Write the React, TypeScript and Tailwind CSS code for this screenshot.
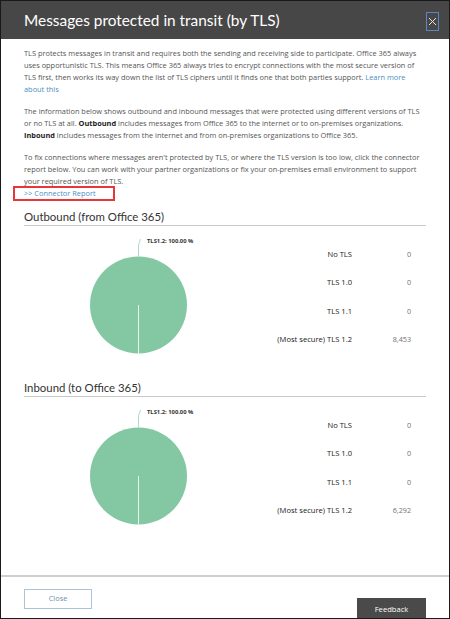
import React from "react";

const font = { fontFamily: '"Open Sans", "Noto Sans", Arial, sans-serif' };
const lato = { fontFamily: 'Lato, "Open Sans", Arial, sans-serif' };

function Pie() {
  return (
    <svg width="230" height="136" viewBox="0 0 230 136" className="block shrink-0">
      <circle cx="114.5" cy="79" r="48.5" fill="#83c7a3" />
      <line x1="114.5" y1="79" x2="114.5" y2="127.5" stroke="#e8f5ee" strokeWidth="1" />
      <path d="M114.5 30.5 L114.5 19 L116.5 13" fill="none" stroke="#9fd3b5" strokeWidth="0.8" />
      <text x="123" y="16.5" fontSize="5.8" fontWeight="700" fill="#333" style={font}>
        TLS1.2: 100.00 %
      </text>
    </svg>
  );
}

function Section({ title, total }: { title: string; total: string }) {
  const rows: [string, string][] = [
    ["No TLS", "0"],
    ["TLS 1.0", "0"],
    ["TLS 1.1", "0"],
    ["(Most secure) TLS 1.2", total],
  ];
  return (
    <div className="mx-[23px]">
      <div className="text-[11.4px] leading-[15px] text-[#333] border-b border-[#c8c8c8] pb-[1px]" style={lato}>
        {title}
      </div>
      <div className="flex">
        <Pie />
        <div className="flex flex-col pt-[23px] shrink-0">
          {rows.map(([l, v]) => (
            <div key={l} className="flex h-[28.3px] items-start">
              <div className="w-[98px] text-right text-[7.6px] text-[#222] whitespace-nowrap">{l}</div>
              <div className="w-[59px] text-right text-[7.2px] text-[#707070]">{v}</div>
            </div>
          ))}
        </div>
      </div>
    </div>
  );
}

export default function App() {
  return (
    <div className="w-[450px] h-[619px] overflow-hidden bg-white border border-[#1a1a1a] flex flex-col" style={font}>
      <div className="h-[38px] bg-[#474747] flex items-center justify-between pl-[23px] pr-[10px] pt-[2px] shrink-0">
        <div className="text-white text-[15.4px] leading-none" style={lato}>Messages protected in transit (by TLS)</div>
        <div className="w-[13px] h-[19px] border border-[#5b86c2] flex items-center justify-center">
          <svg width="9" height="9" viewBox="0 0 9 9">
            <path d="M1 1 L8 8 M8 1 L1 8" stroke="#e6e6e6" strokeWidth="1" />
          </svg>
        </div>
      </div>
      <div className="px-[23px] pt-[8px] text-[7.4px] leading-[12px] text-[#555]">
        <p>
          TLS protects messages in transit and requires both the sending and receiving side to participate. Office 365 always
          uses opportunistic TLS. This means Office 365 always tries to encrypt connections with the most secure version of
          TLS first, then works its way down the list of TLS ciphers until it finds one that both parties support.{" "}
          <span className="text-[#4a8fc4]">Learn more about this</span>
        </p>
        <p className="mt-[10px]">
          The information below shows outbound and inbound messages that were protected using different versions of TLS
          or no TLS at all. <b className="text-[#222]">Outbound</b> includes messages from Office 365 to the internet or to on-premises organizations.{" "}
          <b className="text-[#222]">Inbound</b> includes messages from the internet and from on-premises organizations to Office 365.
        </p>
        <p className="mt-[10px]">
          To fix connections where messages aren't protected by TLS, or where the TLS version is too low, click the connector
          report below. You can work with your partner organizations or fix your on-premises email environment to support
          your required version of TLS.
        </p>
        <div className="relative">
          <span className="text-[#4a8fc4]">&gt;&gt; Connector Report</span>
          <div className="absolute left-[-11px] top-[-1.5px] w-[102px] h-[15px] border-[2.5px] border-[#e8363b]" />
        </div>
      </div>
      <div className="mt-[10px]">
        <Section title="Outbound (from Office 365)" total="8,453" />
      </div>
      <div className="mt-[18px]">
        <Section title="Inbound (to Office 365)" total="6,292" />
      </div>
      <div className="flex-1" />
      <div className="border-t-[2px] border-[#cfcfcf] h-[43px] shrink-0 flex justify-between items-start px-[23px]">
        <button className="mt-[12px] w-[68px] h-[20px] border border-[#a9c4dc] text-[7.4px] text-[#6d8fb0]">Close</button>
        <div className="mt-[21px] w-[69px] h-[26px] bg-[#4a4a4a] text-white text-[7.6px] flex items-center justify-center pb-[2px]">
          Feedback
        </div>
      </div>
    </div>
  );
}
